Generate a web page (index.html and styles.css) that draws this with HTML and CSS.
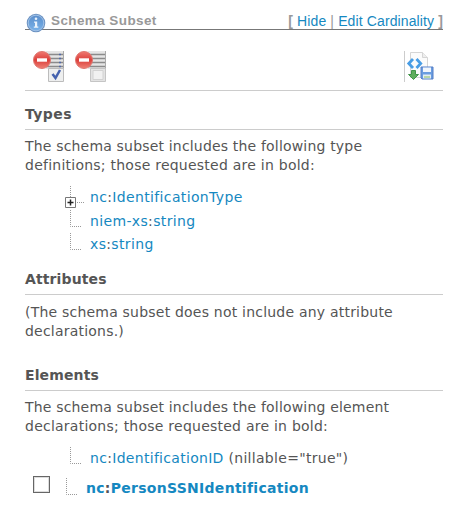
FILE: index.html
```html
<!DOCTYPE html>
<html lang="en">
<head>
<meta charset="utf-8">
<title>Schema Subset</title>
<link rel="stylesheet" href="styles.css">
</head>
<body>
<main class="panel">
  <header class="bar">
    <svg class="info" width="20" height="20" viewBox="0 0 20 20">
      <defs><linearGradient id="blue" x2="0" y2="1"><stop stop-color="#5b8ecb"/><stop offset="1" stop-color="#79b2e9"/></linearGradient></defs>
      <circle cx="10" cy="10" r="9.3" fill="#6d93c2"/>
      <circle cx="10" cy="10" r="7.8" fill="url(#blue)" stroke="#a0c2e8" stroke-width="1"/>
      <circle cx="10" cy="5.8" r="1.3" fill="#eaf3fc"/>
      <path d="M8 8.5h3.2v5H12.3v1.3H7.8v-1.3H9V9.8H8z" fill="#eaf3fc"/>
    </svg>
    <h1>Schema Subset</h1>
    <nav>[ <a>Hide</a> <i>|</i> <a>Edit Cardinality</a> ]</nav>
  </header>
  <div class="tools">
    <svg width="32" height="32" viewBox="0 0 32 32">
      <defs><linearGradient id="red" x2="0" y2="1"><stop stop-color="#f07870"/><stop offset=".5" stop-color="#db3f3b"/><stop offset="1" stop-color="#ef8175"/></linearGradient></defs>
      <path d="M13 0h17v18H13z" fill="#e5e5e5"/>
      <path d="M13 3.500h17M15 7.500h15M15 11.500h15M13 15.500h17" stroke="#8b8b8b" stroke-width="1.4"/>
      <path d="M26 3.500h2M26 7.500h2M26 11.500h2M26 15.500h2" stroke="#5269aa" stroke-width="1.4"/>
      <path d="M30.500 0v18" stroke="#aaa"/>
      <path d="M15.500 17.500h15v13h-15z" fill="#eeefef" stroke="#bcbcbc"/>
      <path d="M19.500 23l3 4L27 19" fill="none" stroke="#4562ae" stroke-width="2.5"/>
      <circle cx="9" cy="9" r="8.500" fill="url(#red)" stroke="#df7770"/>
      <path d="M4 7.300h10v3.400H4z" fill="#fff"/>
    </svg>
    <svg width="32" height="32" viewBox="0 0 32 32">
      <path d="M13 0h17v18H13z" fill="#e5e5e5"/>
      <path d="M13 3.500h17M15 7.500h15M15 11.500h15M13 15.500h17" stroke="#8b8b8b" stroke-width="1.4"/>
      <path d="M30.500 0v18" stroke="#aaa"/>
      <path d="M15.500 17.500h15v13h-15z" fill="#e3e3e3" stroke="#c5c5c5"/>
      <path d="M18 19.500h10v9H18z" fill="#f1f1f1" stroke="#d2d2d2"/>
      <circle cx="9" cy="9" r="8.500" fill="url(#red)" stroke="#df7770"/>
      <path d="M4 7.300h10v3.400H4z" fill="#fff"/>
    </svg>
    <svg class="save" width="32" height="32" viewBox="0 0 32 32">
      <path d="M.5 0v31" stroke="#ccc"/>
      <path d="M6.500 1.500h12l5 5v20h-17z" fill="#fbfbfb" stroke="#d5d5d5"/>
      <path d="M18.500 1.500v5h5" fill="#eee" stroke="#d5d5d5"/>
      <path d="M9 8L4.800 12.500L9 17M12.500 8L16.700 12.500L12.500 17" fill="none" stroke="#489de5" stroke-width="2.800"/>
      <path d="M7.500 19.500h4v4h3L9.500 28.500L4.500 23.500h3z" fill="#5fae5d" stroke="#42954a"/>
      <path d="M17 16h12v12H18l-1-1z" fill="#6a9de0" stroke="#557fc7"/>
      <path d="M19 16.500h8v4.500h-8z" fill="#f2f6fc"/>
      <path d="M19 23.500h8v4h-8z" fill="#e3edf3"/><path d="M20 26h6" stroke="#8cc05d"/>
    </svg>
  </div>
  <section class="types">
    <h2 class="wide">Types</h2>
    <p>The schema subset includes the following type<br><span class="loose">definitions; those requested are in bold:</span></p>
    <ul>
      <li><svg class="branch" width="20" height="24" viewBox="0 0 20 24"><path d="M5.500 3v21M12 19.500h8" class="dots"/><path d="M.5 14.500h10v10h-10z" class="box"/><path d="M2.500 19.500h6M5.500 16.500v6" class="plus"/></svg><a>nc<b>:</b>IdentificationType</a></li>
      <li><svg class="branch" width="20" height="24" viewBox="0 0 20 24"><path d="M5.500 3v16.500H17" class="dots"/></svg><a>niem-xs<b>:</b>string</a></li>
      <li><svg class="branch" width="20" height="24" viewBox="0 0 20 24"><path d="M5.500 3v16.500H17" class="dots"/></svg><a>xs<b>:</b>string</a></li>
    </ul>
  </section>
  <section class="attributes">
    <h2>Attributes</h2>
    <p><span class="mid">(The schema subset does not include any attribute<br>declarations.)</span></p>
  </section>
  <section class="elements">
    <h2>Elements</h2>
    <p>The schema subset includes the following element<br><span class="loose">declarations; those requested are in bold:</span></p>
    <ul>
      <li><svg class="branch" width="20" height="24" viewBox="0 0 20 24"><path d="M5.500 3v16.500H17" class="dots"/></svg><span><a>nc<b>:</b>IdentificationID</a> (nillable="true")</span></li>
      <li class="requested"><span class="check"></span><svg class="branch" width="20" height="24" viewBox="0 0 20 24"><path d="M5.500 3v16.500H17" class="dots"/></svg><a>nc<b>:</b>PersonSSNIdentification</a></li>
    </ul>
  </section>
</main>
</body>
</html>
```
FILE: styles.css
```css
* { box-sizing: border-box; }
body { margin: 0; background: #fff; color: #555; font: 14px/19px "DejaVu Sans", Verdana, sans-serif; }
.panel { width: 418px; margin-left: 25px; padding-top: 11px; }
a { color: #1588c1; }
.bar { display: flex; height: 19px; border-bottom: 1px solid #777; font: 14px/20px "Liberation Sans", Arial, sans-serif; }
.info { flex: none; margin: 2px 0 0 1px; }
h1 { margin: 0 0 0 5px; font-size: 13.5px; line-height: 20px; color: #999; letter-spacing: .4px; }
nav { margin-left: auto; color: #999; font-weight: bold; white-space: nowrap; letter-spacing: .12px; }
nav a, nav i { font-weight: normal; font-style: normal; }
.tools { display: flex; gap: 10px; height: 61px; padding: 21px 0 0 8px; border-bottom: 1px solid #ccc; }
.save { margin-left: auto; margin-right: 7px; }
h2 { margin: 0; height: 39px; padding-top: 14px; border-bottom: 1px solid #ccc; font-size: 14px; line-height: 19px; letter-spacing: .12px; }
.wide { letter-spacing: .4px; }
p { margin: 0; padding-top: 7px; height: 45px; white-space: nowrap; letter-spacing: .18px; }
.mid { letter-spacing: .21px; }
.loose { letter-spacing: .24px; }
.attributes p { padding-top: 8px; }
ul { list-style: none; margin: 0; padding: 8px 0 0; }
li { display: flex; align-items: flex-start; height: 23.5px; padding-left: 40px; line-height: 28px; white-space: nowrap; letter-spacing: .35px; }
li > span { letter-spacing: .3px; }
.branch { flex: none; margin-right: 5px; overflow: visible; }
li b { font-weight: inherit; color: #555; }
.dots { fill: none; stroke: #999; stroke-dasharray: 1 1; }
.box { fill: #fff; stroke: #777; }
.plus { stroke: #222; stroke-width: 1.5; }
.types { height: 165px; }
.attributes { height: 96px; }
.requested { height: 30px; padding: 7px 0 0 8px; line-height: 27px; font-weight: bold; letter-spacing: .28px; }
.check { flex: none; width: 17px; height: 17px; margin: 1px 11px 0 0; border: 1px solid #666; background: #fff; box-shadow: inset 0 0 0 1px #ddd; }
```
